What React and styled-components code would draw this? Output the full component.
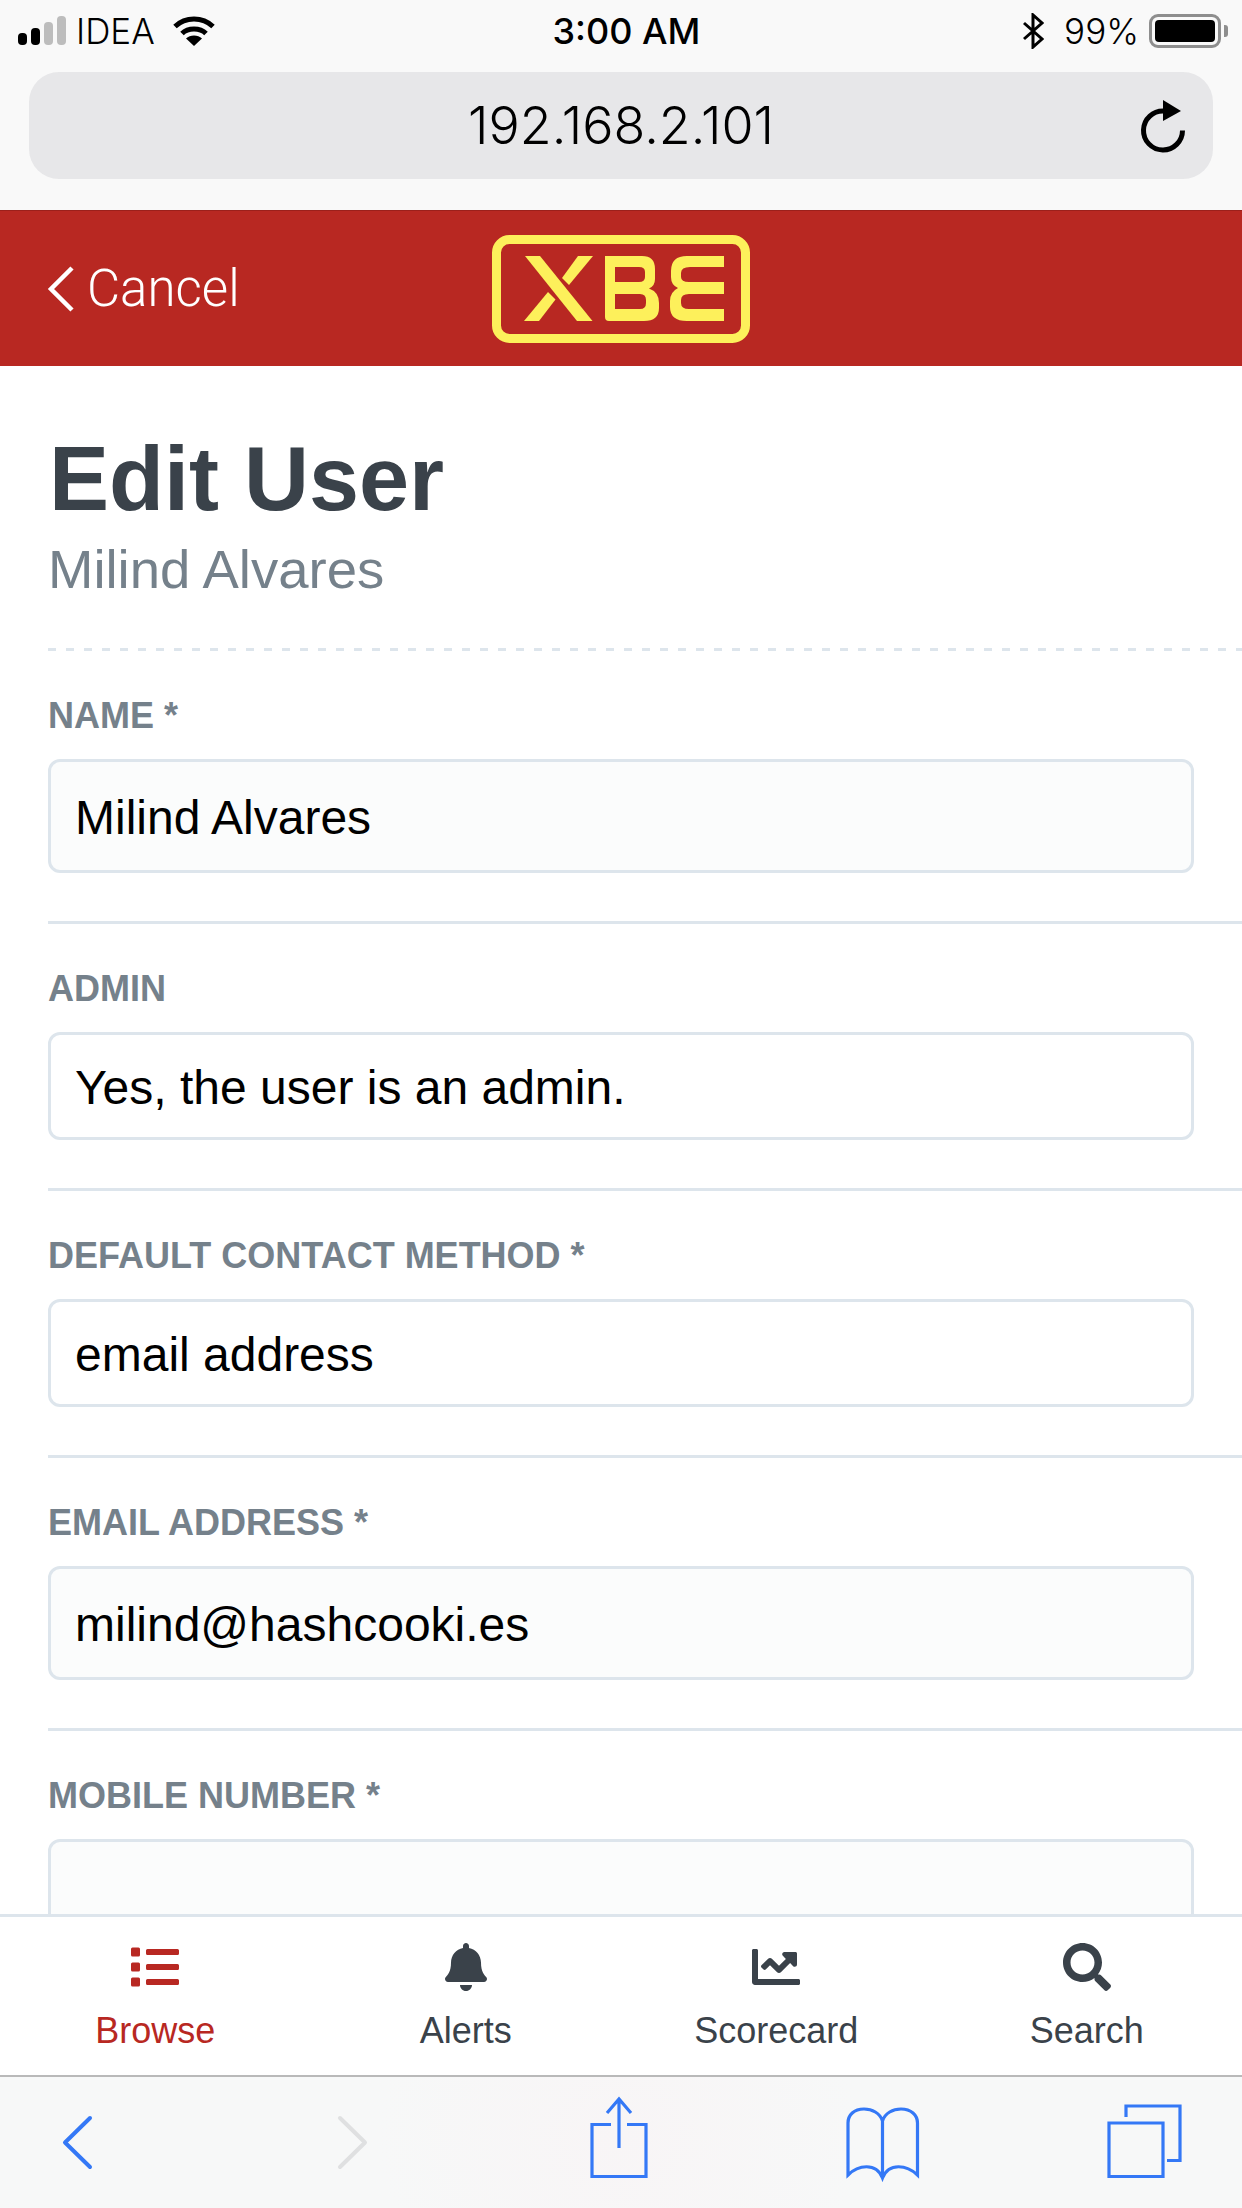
import React from "react";
import styled, { createGlobalStyle } from "styled-components";
import { FaList, FaBell, FaChartLine, FaSearch } from "react-icons/fa";

const GlobalStyle = createGlobalStyle`
    html, body {
        margin: 0;
        padding: 0;
        background: #fff;
    }
    * {
        box-sizing: border-box;
    }
`;

const Page = styled.div`
    width: 1242px;
    height: 2208px;
    display: flex;
    flex-direction: column;
    overflow: hidden;
    font-family: "Liberation Sans", Arial, sans-serif;
`;

const Chrome = styled.div`
    height: 210px;
    flex: none;
    background: #f9f9f9;
    display: flex;
    flex-direction: column;
`;

const StatusBar = styled.div`
    height: 62px;
    padding: 0 21px 0 18px;
    display: grid;
    grid-template-columns: 1fr auto 1fr;
    align-items: center;
    font-family: Inter, "Liberation Sans", sans-serif;
    font-size: 35px;
    color: #000;
`;

const StatusLeft = styled.div`
    display: flex;
    align-items: center;
    font-weight: 300;
`;

const StatusRight = styled.div`
    display: flex;
    align-items: center;
    justify-content: flex-end;
    font-weight: 300;
`;

const Carrier = styled.span`
    margin: 0 18px 0 10px;
`;

const Clock = styled.div`
    font-weight: 500;
    font-size: 36px;
    margin-left: 14px;
`;

const Percent = styled.span`
    margin: 0 10px 0 20px;
`;

const Battery = styled.div`
    width: 72px;
    height: 34px;
    border: 3px solid #8e8e8e;
    border-radius: 9px;
    padding: 3px;
    position: relative;
    &::after {
        content: "";
        position: absolute;
        right: -10px;
        top: 8px;
        width: 4px;
        height: 12px;
        background: #8e8e8e;
        border-radius: 0 3px 3px 0;
    }
`;

const BatteryFill = styled.div`
    height: 100%;
    background: #000;
    border-radius: 4px;
`;

const UrlBar = styled.div`
    height: 107px;
    margin: 10px 29px 0;
    background: #e7e7e9;
    border-radius: 30px;
    display: flex;
    align-items: center;
    justify-content: center;
    position: relative;
    font-family: Inter, "Liberation Sans", sans-serif;
    font-size: 52px;
    font-weight: 300;
    color: #000;
    svg {
        position: absolute;
        right: 20px;
        top: 25px;
    }
`;

const Header = styled.header`
    height: 156px;
    flex: none;
    background: #b82822;
    border-top: 1px solid #9c201b;
    display: grid;
    grid-template-columns: 1fr auto 1fr;
    align-items: center;
`;

const CancelLink = styled.div`
    display: flex;
    align-items: center;
    gap: 12px;
    padding-left: 47px;
    font-family: Roboto, "Liberation Sans", sans-serif;
    font-weight: 300;
    font-size: 51px;
    color: #fff;
`;

const Content = styled.main`
    flex: 1;
    min-height: 0;
    overflow: hidden;
    background: #fff;
    padding-left: 48px;
`;

const PageHead = styled.div`
    height: 285px;
    padding-top: 63px;
    background: repeating-linear-gradient(90deg, #dde5ec 0 8px, transparent 8px 18px) left bottom / 100% 3px no-repeat;
`;

const Title = styled.h1`
    margin: 0 0 0 1px;
    font-size: 90px;
    line-height: 100px;
    font-weight: 700;
    color: #3a424a;
`;

const Subtitle = styled.div`
    margin-top: 9px;
    font-size: 54.5px;
    line-height: 64px;
    color: #75818b;
`;

const Field = styled.section`
    padding: 43px 0 48px;
    border-bottom: 3px solid #dde5ec;
`;

const Label = styled.label`
    display: block;
    font-size: 36px;
    line-height: 44px;
    font-weight: 700;
    color: #75818b;
    margin-bottom: 21px;
`;

const Control = styled.div`
    height: ${props => (props.$select ? "108px" : "114px")};
    margin-right: 48px;
    padding: 2px 0 0 24px;
    display: flex;
    align-items: center;
    background: ${props => (props.$select ? "#fff" : "#fbfcfc")};
    border: 3px solid #dde5ec;
    border-radius: 12px;
    font-size: 48px;
    color: #000;
`;

const TabBar = styled.nav`
    height: 163px;
    flex: none;
    background: #fff;
    border-top: 3px solid #dde5ec;
    border-bottom: 2px solid #b9b9b9;
    display: grid;
    grid-template-columns: repeat(4, 1fr);
`;

const Tab = styled.div`
    display: flex;
    flex-direction: column;
    align-items: center;
    padding-top: 26px;
    font-size: 36px;
    color: ${props => (props.$active ? "#b82822" : "#3a424a")};
`;

const TabIcon = styled.div`
    height: 48px;
    display: flex;
    align-items: center;
    justify-content: center;
    margin-bottom: 19px;
    font-size: 48px;
`;

const SafariBar = styled.div`
    height: 131px;
    flex: none;
    background: radial-gradient(ellipse 240px 210px at 619px 60px, #f8f5f6, #f7f8f8);
    display: flex;
`;

const SafariIcons = styled.svg`
    display: block;
    width: 1242px;
    height: 131px;
    fill: none;
    stroke: #3478f6;
    stroke-width: 3.2;
`;

const Chevron = styled.path`
    stroke-width: 4;
    stroke-linecap: round;
    stroke-linejoin: round;
`;

const ReloadIcon = () => (
    <svg width="56" height="60" viewBox="0 0 56 60" fill="none">
        <path d="M27 14A19.500 19.500 0 1 0 45.500 33.500" stroke="#000" strokeWidth="5" />
        <path d="M26 3L44 14 26 24Z" fill="#000" />
    </svg>
);

const SignalBars = () => (
    <svg width="48" height="30" viewBox="0 0 48 30">
        <rect x="0" y="17" width="9" height="12" rx="4" fill="#000" />
        <rect x="13" y="12" width="9" height="17" rx="4" fill="#000" />
        <rect x="26" y="6" width="9" height="23" rx="4" fill="#bdbdbd" />
        <rect x="39" y="0" width="9" height="29" rx="4" fill="#bdbdbd" />
    </svg>
);

const WifiIcon = () => (
    <svg width="42" height="30" viewBox="0 0 42 30" fill="none" stroke="#000" strokeWidth="5">
        <path d="M2 10.500C12.500 .5 29.500 .5 40 10.500" />
        <path d="M9 17.500C15 11.500 27 11.500 33 17.500" />
        <path d="M21 30L13 22.500C17 18.500 25 18.500 29 22.500Z" fill="#000" stroke="none" />
    </svg>
);

const BluetoothIcon = () => (
    <svg width="21" height="36" viewBox="0 0 21 36" fill="none" stroke="#000" strokeWidth="3">
        <path d="M1 10L19 26 10 34V2L19 10 1 26" />
    </svg>
);

const XbeLogo = () => (
    <svg width="258" height="108" viewBox="0 0 258 108" role="img" aria-label="XBE">
        <rect x="4.5" y="4.5" width="249" height="99" rx="13" fill="none" stroke="#fdf05b" strokeWidth="9" />
        <g fill="#fdf05b" fillRule="evenodd">
            <path d="M33 21H48L100.500 86H85Z" />
            <path d="M86 21H101L77 50 70 43Z" />
            <path d="M56 57L63.500 64.500 47 86H32Z" />
            <path d="M113 21H150Q163 21 163 34V44Q163 51 157 53.500Q167 57 167 68V73Q167 86 152 86H117Q113 86 113 82ZM123 32V47H147Q153 47 153 42V37Q153 32 147 32ZM123 59V74H148Q154 74 154 68V65Q154 59 148 59Z" />
            <path d="M232 21V32H198Q189 32 189 38V42Q189 47 197 47H232V59H197Q189 59 189 65V68Q189 74 197 74H232V86H195Q178 86 178 72V66Q178 57 186 53Q179 50 179 42V36Q179 21 195 21Z" />
        </g>
    </svg>
);

const FIELDS = [
    { label: "NAME *", value: "Milind Alvares" },
    { label: "ADMIN", value: "Yes, the user is an admin.", select: true },
    { label: "DEFAULT CONTACT METHOD *", value: "email address", select: true },
    { label: "EMAIL ADDRESS *", value: "milind@hashcooki.es" },
    { label: "MOBILE NUMBER *", value: "" },
];

const TABS = [
    { name: "Browse", Icon: FaList, active: true },
    { name: "Alerts", Icon: FaBell },
    { name: "Scorecard", Icon: FaChartLine },
    { name: "Search", Icon: FaSearch },
];

const App = () => (
    <Page>
        <GlobalStyle />
        <Chrome>
            <StatusBar>
                <StatusLeft>
                    <SignalBars />
                    <Carrier>IDEA</Carrier>
                    <WifiIcon />
                </StatusLeft>
                <Clock>3:00 AM</Clock>
                <StatusRight>
                    <BluetoothIcon />
                    <Percent>99%</Percent>
                    <Battery>
                        <BatteryFill />
                    </Battery>
                </StatusRight>
            </StatusBar>
            <UrlBar>
                192.168.2.101
                <ReloadIcon />
            </UrlBar>
        </Chrome>
        <Header>
            <CancelLink>
                <svg width="28" height="46" viewBox="0 0 28 46" fill="none" stroke="#fff" strokeWidth="4.5">
                    <path d="M25 2L4 23 25 44" />
                </svg>
                Cancel
            </CancelLink>
            <XbeLogo />
        </Header>
        <Content>
            <PageHead>
                <Title>Edit User</Title>
                <Subtitle>Milind Alvares</Subtitle>
            </PageHead>
            {FIELDS.map(field => (
                <Field key={field.label}>
                    <Label>{field.label}</Label>
                    <Control $select={field.select}>{field.value}</Control>
                </Field>
            ))}
        </Content>
        <TabBar>
            {TABS.map(({ name, Icon, active }) => (
                <Tab key={name} $active={active}>
                    <TabIcon>
                        <Icon />
                    </TabIcon>
                    {name}
                </Tab>
            ))}
        </TabBar>
        <SafariBar>
            <SafariIcons viewBox="0 0 1242 131">
                <Chevron d="M90 41L65 65.500 90 90" />
                <Chevron d="M340 41L365 65.500 340 90" stroke="#dfe0e1" />
                <path d="M611 47.500H592V99.500H646V47.500H627M619 71V23M607 36L619 22 631 36" />
                <path d="M882.500 44C880 36 872 32 864 32 854 32 848 38 848 46V98C858 88 876 85 882.500 101 889 85 907 88 917.500 98V46C917.500 38 911 32 901 32 893 32 885 36 882.500 44V101" />
                <path d="M1126 40V29H1180V83.500H1167M1109 46H1163V99.500H1109Z" />
            </SafariIcons>
        </SafariBar>
    </Page>
);

export default App;
